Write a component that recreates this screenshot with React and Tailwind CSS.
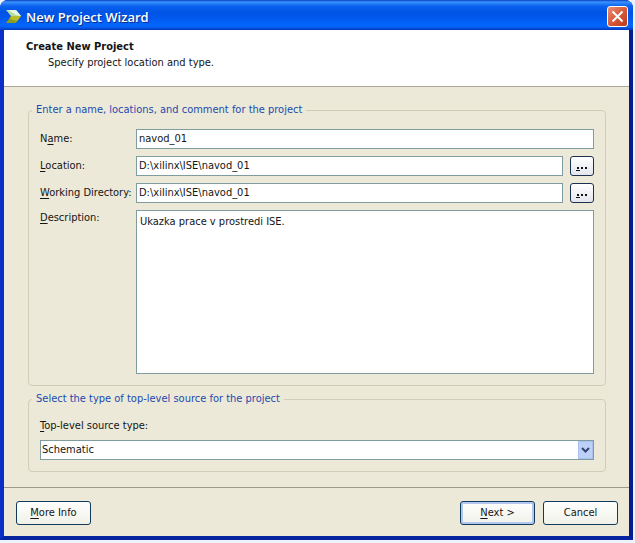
import { useState } from "react";

// Etiqueta con la letra de acceso rápido subrayada
function Mnemonic({ before = "", letter, after = "" }) {
  return (
    <>
      {before}
      <u className="underline underline-offset-2 [text-decoration-skip-ink:none]">{letter}</u>
      {after}
    </>
  );
}

function Logo() {
  return (
    <svg className="w-4 h-4 shrink-0" viewBox="0 0 16 16" aria-hidden="true">
      <path d="M0 1 L10 1 L15 7 L5 7 Z" fill="#b9dc9a" />
      <path d="M2 1 L10 1 L15 7 L10 6 Z" fill="#e6f6e4" />
      <path d="M5 7 L15 7 L10 14 L0 14 Z" fill="#8a9c22" />
      <path d="M5 7 L15 7 L11 12 L4 10 Z" fill="#b9bd2c" />
    </svg>
  );
}

function TextField({ id, value, onChange }) {
  return (
    <input
      id={id}
      type="text"
      value={value}
      onChange={(e) => onChange(e.target.value)}
      className="w-full min-w-0 h-5 px-0.5 pb-px bg-white border border-[#7f9d9f] outline-none"
    />
  );
}

function BrowseButton({ label }) {
  return (
    <button
      type="button"
      aria-label={label}
      className="shrink-0 w-6 h-5 flex items-end justify-center pb-1 rounded-[3px] border border-[#1c3050] bg-gradient-to-b from-white to-[#e4e6ef]"
    >
      <svg className="w-3 h-1" viewBox="0 0 12 4" aria-hidden="true">
        <path d="M1 0h2v2H1zM5 0h2v2H5zM9 0h2v2H9zM0 3h4v1H0z" fill="#111" />
      </svg>
    </button>
  );
}

function Group({ title, className = "", children }) {
  return (
    <fieldset className={`min-w-0 px-[11px] pb-[11px] rounded-[4px] border border-[#d0cdb8] ${className}`}>
      <legend className="-ml-2 px-1 leading-4 text-[#1c49b0]">{title}</legend>
      {children}
    </fieldset>
  );
}

const buttonBase =
  "w-[75px] h-6 rounded-[3px] border border-[#123a5c] bg-gradient-to-b from-white to-[#f0f1e8] pb-px text-center";

export default function App() {
  const [name, setName] = useState("navod_01");
  const [location, setLocation] = useState("D:\\xilinx\\ISE\\navod_01");
  const [workDir, setWorkDir] = useState("D:\\xilinx\\ISE\\navod_01");
  const [description, setDescription] = useState("Ukazka prace v prostredi ISE.");

  return (
    <div className="bg-[#eef2fa] pr-0.5 pb-[3px] font-['DejaVu_Sans_Condensed','DejaVu_Sans',sans-serif] text-[11px] leading-4 text-[#151515]">
      <div className="rounded-t-lg bg-[#0a2fc4] border-b-4 border-x-4 border-b-[#0624a0] border-l-[#0a2fc8] border-r-[#051c92]">
        {/* Barra de título */}
        <header className="-mx-1 h-[30px] flex items-center gap-1 rounded-t-lg pl-1.5 pr-[5px] pt-[3px] bg-[linear-gradient(to_bottom,#0a3fc4_0px,#3a93ff_2px,#0b62f0_6px,#0054e3_12px,#0058ee_18px,#0366fc_25px,#0560f4_27px,#0038b8_30px)]">
          <Logo />
          <h1 className="flex-1 font-['Open_Sans',sans-serif] text-[13px] font-semibold text-white [text-shadow:1px_1px_#0a2f8c]">
            New Project Wizard
          </h1>
          <button
            type="button"
            aria-label="Close"
            className="w-[21px] h-[21px] flex items-center justify-center rounded-[3px] border border-white bg-gradient-to-br from-[#ea8f74] via-[#d65a3a] to-[#b83a1a]"
          >
            <svg className="w-[13px] h-[13px]" viewBox="0 0 13 13" aria-hidden="true">
              <path d="M1.5 1.5 L11.5 11.5 M11.5 1.5 L1.5 11.5" stroke="#fff" strokeWidth="2" />
            </svg>
          </button>
        </header>

        <div className="bg-[#ece9d8]">
          <section className="bg-white pl-[22px] pt-[9px] pb-[15px] border-b border-[#aca899]">
            <h2 className="font-bold">Create New Project</h2>
            <p className="pl-[22px]">Specify project location and type.</p>
          </section>

          <main className="pt-[15px] pb-[15px] pl-6 pr-[23px]">
            <Group title="Enter a name, locations, and comment for the project">
              <div className="grid grid-cols-[96px_1fr] gap-y-[7px] pt-[11px]">
                <label htmlFor="name" className="pt-0.5">
                  <Mnemonic before="N" letter="a" after="me:" />
                </label>
                <TextField id="name" value={name} onChange={setName} />

                <label htmlFor="location" className="pt-0.5">
                  <Mnemonic letter="L" after="ocation:" />
                </label>
                <div className="flex gap-[7px]">
                  <TextField id="location" value={location} onChange={setLocation} />
                  <BrowseButton label="Browse location" />
                </div>

                <label htmlFor="workdir" className="pt-0.5 whitespace-nowrap">
                  <Mnemonic letter="W" after="orking Directory:" />
                </label>
                <div className="flex gap-[7px]">
                  <TextField id="workdir" value={workDir} onChange={setWorkDir} />
                  <BrowseButton label="Browse working directory" />
                </div>

                <label htmlFor="description">
                  <Mnemonic letter="D" after="escription:" />
                </label>
                <textarea
                  id="description"
                  value={description}
                  onChange={(e) => setDescription(e.target.value)}
                  className="block w-full h-[164px] px-[3px] py-[3px] bg-white border border-[#7f9d9f] resize-none outline-none"
                />
              </div>
            </Group>

            <Group title="Select the type of top-level source for the project" className="mt-[5px]">
              <label htmlFor="source" className="block pt-[11px]">
                <Mnemonic letter="T" after="op-level source type:" />
              </label>
              <div className="relative mt-1.5">
                <select
                  id="source"
                  defaultValue="Schematic"
                  className="block w-full h-5 pl-px pr-5 pb-px appearance-none bg-white border border-[#7f9d9f] outline-none"
                >
                  <option>Schematic</option>
                  <option>HDL</option>
                  <option>EDIF</option>
                  <option>NGC/NGO</option>
                </select>
                <span className="absolute right-px inset-y-px w-[15px] flex items-center justify-center bg-[#bdd0f8] border border-[#a9c0f0] pointer-events-none">
                  <svg className="w-[9px] h-[6px]" viewBox="0 0 9 6" aria-hidden="true">
                    <path d="M1 1 L4.5 4.5 L8 1" fill="none" stroke="#33466f" strokeWidth="2" />
                  </svg>
                </span>
              </div>
            </Group>
          </main>

          <footer className="flex gap-2 pl-3 pr-[11px] pt-[13px] pb-[11px] border-t border-[#9d9b8c]">
            <button type="button" className={buttonBase}>
              <Mnemonic letter="M" after="ore Info" />
            </button>
            <button type="button" className={`${buttonBase} ml-auto shadow-[inset_0_0_0_2px_#b3c6ee]`}>
              <Mnemonic letter="N" after="ext >" />
            </button>
            <button type="button" className={buttonBase}>
              Cancel
            </button>
          </footer>
        </div>
      </div>
    </div>
  );
}
